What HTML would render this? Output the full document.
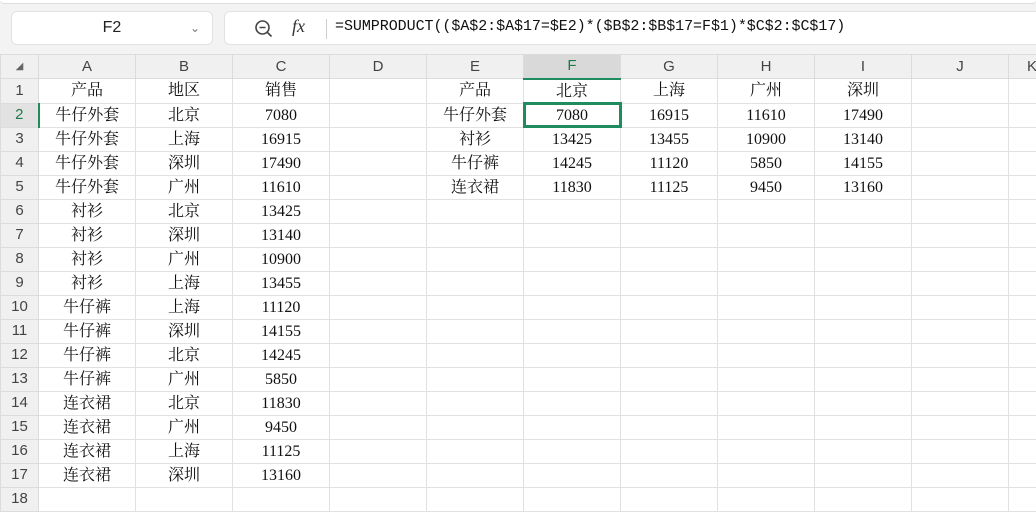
<!DOCTYPE html>
<html><head><meta charset="utf-8"><style>
*{margin:0;padding:0;box-sizing:border-box}
body{width:1036px;height:510px;overflow:hidden;background:#f3f3f3;font-family:"Liberation Sans","Noto Sans CJK SC",sans-serif;position:relative}
.top{position:absolute;left:0;top:0;width:1036px;height:4px;background:#fff;border-bottom:1px solid #ddd;border-radius:0 0 6px 6px}
.nb{position:absolute;left:11px;top:11px;width:202px;height:34px;background:#fff;border:1px solid #e2e2e2;border-radius:6px;font-size:16px;text-align:center;line-height:32px;color:#222}
.nb span{position:absolute;right:12px;top:0;color:#777;font-size:12px}
.fb{position:absolute;left:224px;top:11px;width:820px;height:34px;background:#fff;border:1px solid #e2e2e2;border-radius:6px}
.fb .t{position:absolute;left:110px;top:6px;font-family:"Liberation Mono","Noto Sans CJK SC",monospace;font-size:15px;color:#111;letter-spacing:-0.05px}
.fb .fx{position:absolute;left:67px;top:4px;font-family:"Liberation Serif",serif;font-style:italic;font-size:18px;color:#333}
.fb .sep{position:absolute;left:101px;top:7px;width:1px;height:20px;background:#ccc}
table{position:absolute;left:0;top:54px;width:1068px;border-collapse:collapse;table-layout:fixed;background:#fff}
tr{height:24px}
td{height:24px;line-height:22px;border:1px solid #e1e1e1;text-align:center;font-family:"Liberation Serif","Noto Serif CJK SC",serif;font-size:16px;color:#111;padding:1px 0 0;white-space:nowrap;overflow:hidden}
tr.h td{background:#f0f0f0;font-family:"Liberation Sans",sans-serif;font-size:15px;color:#444;padding:0;border-color:#dcdcdc}
td.r{background:#f0f0f0;font-family:"Liberation Sans",sans-serif;font-size:15px;color:#444;border-color:#dcdcdc;padding:0}
td.sel{outline:3px solid #1e8c5e;outline-offset:-2px;position:relative}
tr.h td.fh{background:#d9d9d9;color:#1e7a4d;border-bottom:2px solid #1e8c5e}
td.rh{color:#1e7a4d;background:#e2e2e2;border-right:2px solid #1e8c5e}
</style></head><body>
<div class="top"></div>
<div class="nb">F2<span>&#8964;</span></div>
<div class="fb"><svg style="position:absolute;left:29px;top:7px" width="20" height="20" viewBox="0 0 20 20"><circle cx="8.5" cy="8.5" r="6.5" fill="none" stroke="#444" stroke-width="1.6"/><path d="M5.5 8.5h6M13.5 13.5l4 4" stroke="#444" stroke-width="1.6"/></svg><span class="fx">fx</span><div class="sep"></div><span class="t">=SUMPRODUCT(($A$2:$A$17=$E2)*($B$2:$B$17=F$1)*$C$2:$C$17)</span></div>
<table>
<colgroup><col style="width:38px"><col style="width:97px"><col style="width:97px"><col style="width:97px"><col style="width:97px"><col style="width:97px"><col style="width:97px"><col style="width:97px"><col style="width:97px"><col style="width:97px"><col style="width:97px"><col style="width:60px"></colgroup>
<tr class="h"><td style="font-size:10px;color:#666">&#9698;</td><td>A</td><td>B</td><td>C</td><td>D</td><td>E</td><td class="fh">F</td><td>G</td><td>H</td><td>I</td><td>J</td><td style="text-align:left;padding-left:18px">K</td></tr>
<tr><td class="r">1</td><td>产品</td><td>地区</td><td>销售</td><td></td><td>产品</td><td>北京</td><td>上海</td><td>广州</td><td>深圳</td><td></td><td></td></tr>
<tr><td class="r rh">2</td><td>牛仔外套</td><td>北京</td><td>7080</td><td></td><td>牛仔外套</td><td class="sel">7080</td><td>16915</td><td>11610</td><td>17490</td><td></td><td></td></tr>
<tr><td class="r">3</td><td>牛仔外套</td><td>上海</td><td>16915</td><td></td><td>衬衫</td><td>13425</td><td>13455</td><td>10900</td><td>13140</td><td></td><td></td></tr>
<tr><td class="r">4</td><td>牛仔外套</td><td>深圳</td><td>17490</td><td></td><td>牛仔裤</td><td>14245</td><td>11120</td><td>5850</td><td>14155</td><td></td><td></td></tr>
<tr><td class="r">5</td><td>牛仔外套</td><td>广州</td><td>11610</td><td></td><td>连衣裙</td><td>11830</td><td>11125</td><td>9450</td><td>13160</td><td></td><td></td></tr>
<tr><td class="r">6</td><td>衬衫</td><td>北京</td><td>13425</td><td></td><td></td><td></td><td></td><td></td><td></td><td></td><td></td></tr>
<tr><td class="r">7</td><td>衬衫</td><td>深圳</td><td>13140</td><td></td><td></td><td></td><td></td><td></td><td></td><td></td><td></td></tr>
<tr><td class="r">8</td><td>衬衫</td><td>广州</td><td>10900</td><td></td><td></td><td></td><td></td><td></td><td></td><td></td><td></td></tr>
<tr><td class="r">9</td><td>衬衫</td><td>上海</td><td>13455</td><td></td><td></td><td></td><td></td><td></td><td></td><td></td><td></td></tr>
<tr><td class="r">10</td><td>牛仔裤</td><td>上海</td><td>11120</td><td></td><td></td><td></td><td></td><td></td><td></td><td></td><td></td></tr>
<tr><td class="r">11</td><td>牛仔裤</td><td>深圳</td><td>14155</td><td></td><td></td><td></td><td></td><td></td><td></td><td></td><td></td></tr>
<tr><td class="r">12</td><td>牛仔裤</td><td>北京</td><td>14245</td><td></td><td></td><td></td><td></td><td></td><td></td><td></td><td></td></tr>
<tr><td class="r">13</td><td>牛仔裤</td><td>广州</td><td>5850</td><td></td><td></td><td></td><td></td><td></td><td></td><td></td><td></td></tr>
<tr><td class="r">14</td><td>连衣裙</td><td>北京</td><td>11830</td><td></td><td></td><td></td><td></td><td></td><td></td><td></td><td></td></tr>
<tr><td class="r">15</td><td>连衣裙</td><td>广州</td><td>9450</td><td></td><td></td><td></td><td></td><td></td><td></td><td></td><td></td></tr>
<tr><td class="r">16</td><td>连衣裙</td><td>上海</td><td>11125</td><td></td><td></td><td></td><td></td><td></td><td></td><td></td><td></td></tr>
<tr><td class="r">17</td><td>连衣裙</td><td>深圳</td><td>13160</td><td></td><td></td><td></td><td></td><td></td><td></td><td></td><td></td></tr>
<tr><td class="r">18</td><td></td><td></td><td></td><td></td><td></td><td></td><td></td><td></td><td></td><td></td><td></td></tr>
</table>
</body></html>
